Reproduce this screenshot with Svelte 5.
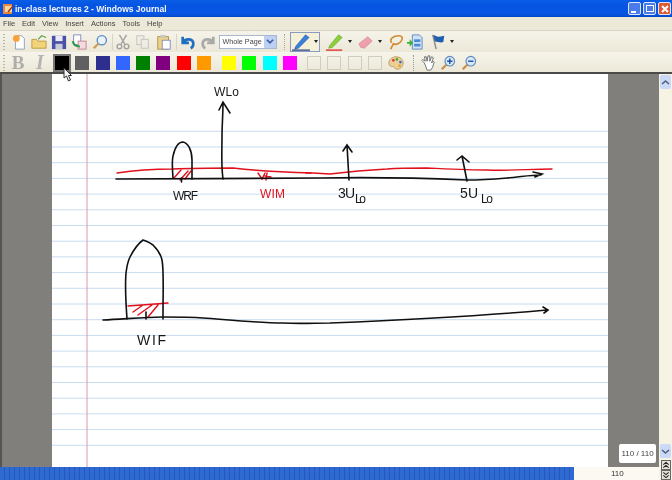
<script>
  const menus = ['File','Edit','View','Insert','Actions','Tools','Help'];
  const colors1 = ['#000000','#606060','#2e2e8e','#3366ff','#008000','#800080','#ff0000','#ff9900'];
  const colors2 = ['#ffff00','#00ff00','#00ffff','#ff00ff'];
  const rules = Array.from({length: 21}, (_, i) => 131.3 + i * 15.7 - 74);
</script>

<div class="app">
  <header class="title">
    <svg class="appicon" viewBox="0 0 12 12"><rect x="1" y="1" width="9" height="10" fill="#e8873a"/><rect x="3" y="3" width="7" height="6" fill="#f6d6a8"/><path d="M6 9 L11 3" stroke="#a03a10" stroke-width="1.500"/></svg>
    <span class="caption">in-class lectures 2 - Windows Journal</span>
    <div class="winbtns">
      <span class="wb"><i class="min"></i></span>
      <span class="wb"><i class="rest"></i></span>
      <span class="wb close"><svg viewBox="0 0 10 10"><path d="M2 2 L8 8 M8 2 L2 8" stroke="#fff" stroke-width="2"/></svg></span>
    </div>
  </header>

  <nav class="menu">
    {#each menus as m}<span>{m}</span>{/each}
  </nav>

  <div class="tb tb1">
    <span class="grip"></span>
    <svg class="ic" viewBox="0 0 18 18"><path d="M5 2h7l3 3v12H5z" fill="#fff" stroke="#8a9ab8"/><circle cx="6" cy="5" r="3.800" fill="#f7a23a"/></svg>
    <svg class="ic" viewBox="0 0 18 18"><path d="M1 16V6h5l2 2h9v8z" fill="#f2d37a" stroke="#b89a3c"/><path d="M8 6l4-4 5 2" fill="none" stroke="#5fa04a" stroke-width="1.300"/></svg>
    <svg class="ic" viewBox="0 0 18 18"><path d="M1 2h16v15H1z" fill="#4a50a8"/><rect x="5" y="2" width="8" height="6" fill="#e8eaf8"/><rect x="5" y="11" width="8" height="6" fill="#c8ccd8"/></svg>
    <svg class="ic" viewBox="0 0 18 18"><rect x="3" y="1" width="8" height="11" fill="#fff" stroke="#7a8ab8"/><rect x="8" y="8" width="9" height="9" fill="#f3d9e0" stroke="#c08090"/><path d="M2 8c1 5 4 6 8 6" fill="none" stroke="#2a9a4a" stroke-width="2.400"/></svg>
    <svg class="ic" viewBox="0 0 18 18"><circle cx="11" cy="7" r="5.200" fill="#e8f2fb" stroke="#5a8ac0" stroke-width="1.500"/><path d="M7 11 L2 16" stroke="#d09a50" stroke-width="2.600"/></svg>
    <span class="sep"></span>
    <svg class="ic dim" viewBox="0 0 18 18"><path d="M5 1l6 10M13 1L7 11" stroke="#8f9094" stroke-width="1.600"/><circle cx="5" cy="14" r="2.600" fill="none" stroke="#8f9094" stroke-width="1.600"/><circle cx="13" cy="14" r="2.600" fill="none" stroke="#8f9094" stroke-width="1.600"/></svg>
    <svg class="ic dim" viewBox="0 0 18 18"><rect x="2" y="2" width="8" height="10" fill="#eeeee6" stroke="#b8b8b0"/><rect x="7" y="6" width="8" height="10" fill="#eeeee6" stroke="#b8b8b0"/></svg>
    <svg class="ic" viewBox="0 0 18 18"><rect x="2" y="3" width="12" height="14" fill="#eed28a" stroke="#a8904a"/><rect x="7" y="7" width="9" height="10" fill="#fff" stroke="#7a8ab8"/><rect x="5" y="1" width="6" height="3" fill="#c8c8c8"/></svg>
    <span class="sep s2"></span>
    <svg class="ic" viewBox="0 0 18 18"><path d="M3 3v7h7M3 10c3-6 12-5 12 1 0 2-1 4-3 5" fill="none" stroke="#1f6fc0" stroke-width="3"/></svg>
    <svg class="ic" viewBox="0 0 18 18"><path d="M15 3v7H8M15 10C12 4 3 5 3 11c0 2 1 4 3 5" fill="none" stroke="#a9aaa6" stroke-width="3"/></svg>
    <span class="select"><span>Whole Page</span><b><svg viewBox="0 0 9 7"><path d="M1 1.500 L4.500 5 L8 1.500" fill="none" stroke="#3d5a9c" stroke-width="1.800"/></svg></b></span>
    <span class="sep wide"></span>
    <span class="pen active"><svg viewBox="0 0 22 20"><path d="M5 15 L16 2 L20 5 L8 17 L4 18z" fill="#3a7fd8" stroke="#174f9c" stroke-width=".6"/><path d="M1 19h20" stroke="#0a2a70" stroke-width="1.200"/></svg><em></em></span>
    <span class="pen green"><svg viewBox="0 0 22 20"><path d="M5 14 L15 2 L19 5 L8 16 L4 17z" fill="#8cd03a" stroke="#5a9a20" stroke-width=".6"/><path d="M1 19h18" stroke="#e02020" stroke-width="1.400"/></svg><em></em></span>
    <span class="pen"><svg class="small" viewBox="0 0 18 18"><path d="M1 11 L11 3 L16 8 L7 16 L3 15z" fill="#f0a0ac" stroke="#c87884" stroke-width=".6"/></svg><em></em></span>
    <svg class="ic lasso" viewBox="0 0 18 18"><path d="M4 10C1 5 7 2 12 2s5 4 2 7-6 3-8 2L3 17" fill="none" stroke="#d08a30" stroke-width="1.800"/></svg>
    <svg class="ic ins" viewBox="0 0 18 18"><path d="M6 1h8l3 3v13H6z" fill="#cfe2f6" stroke="#5a86c0"/><rect x="8" y="6" width="7" height="3" fill="#4a8ad0"/><rect x="8" y="11" width="7" height="3" fill="#4a8ad0"/><path d="M0 9h3V6l4 4-4 4v-3H0z" fill="#3ab03a"/></svg>
    <span class="pen"><svg class="small" viewBox="0 0 18 18"><path d="M3 1c3 0 4 2 7 2s4-1 6-1l-1 7c-3 1-4 0-6 0s-3-1-4 0z" fill="#1f5fb0"/><path d="M3 1l4 16" stroke="#8a8a8a" stroke-width="1.600"/></svg><em></em></span>
  </div>

  <div class="tb tb2">
    <span class="grip"></span>
    <b class="fmt">B</b><i class="fmt it">I</i>
    {#each colors1 as c, i}<span class="sw" class:on={i === 0} style:background={c}></span>{/each}
    <span class="gap g1"></span>
    {#each colors2 as c}<span class="sw" style:background={c}></span>{/each}
    <span class="gap g2"></span>
    {#each [0,1,2,3] as _}<span class="sw blank"></span>{/each}
    <svg class="ic pal" viewBox="0 0 18 18"><path d="M9 2c5 0 8 3 8 7s-3 7-7 7c-3 0-2-3-4-3s-5 0-5-4 4-7 8-7z" fill="#eccf96" stroke="#b89a5c"/><circle cx="6" cy="6" r="1.500" fill="#d83a3a"/><circle cx="10" cy="5" r="1.500" fill="#3ab03a"/><circle cx="14" cy="8" r="1.500" fill="#3a6ad8"/><circle cx="13" cy="12" r="1.500" fill="#e8a030"/></svg>
    <span class="sep dotted"></span>
    <svg class="ic" viewBox="0 0 18 18"><path d="M5 9L2 6l1-1 3 2-1-5 2 0 1 5 1-6 2 0 0 6 2-5 2 1-2 6 2-2 1 1-2 6-2 3H8z" fill="#fff" stroke="#555" stroke-width=".9"/></svg>
    <svg class="ic" viewBox="0 0 18 18"><circle cx="11" cy="7" r="5.400" fill="#d8e8f8" stroke="#5a8ac0" stroke-width="1.300"/><path d="M8 7h6M11 4v6" stroke="#1f4fa0" stroke-width="1.600"/><path d="M7 11L2 16" stroke="#c8904a" stroke-width="2.600"/></svg>
    <svg class="ic" viewBox="0 0 18 18"><circle cx="11" cy="7" r="5.400" fill="#d8e8f8" stroke="#5a8ac0" stroke-width="1.300"/><path d="M8 7h6" stroke="#1f4fa0" stroke-width="1.600"/><path d="M7 11L2 16" stroke="#c8904a" stroke-width="2.600"/></svg>
  </div>

  <div class="body">
    <div class="left">
      <main class="work">
        <div class="gutter"></div>
        <div class="page">
          <svg class="ink" viewBox="0 0 556 393" width="556" height="393">
            {#each rules as y}<line class="rule" x1="0" x2="556" y1={y} y2={y}></line>{/each}
            <line class="margin" x1="35" x2="35" y1="0" y2="393"></line>
            <g transform="translate(-52 -74)">
              <g class="r">
                <path d="M117 173 C130 171 145 169 173 169 C195 168 215 168 233 168 C250 170 280 172 313 173 L330 174 C345 172 365 170 387 169 C400 168 415 168 427 168 C450 169 470 170 487 170 C510 171 530 169 552 169"/>
                <path d="M174 178 L181 170 M180 180 L188 171 M185 179 L191 171"/>
                <path d="M258 173 L262 179 L265 173 M267 173 L266 180 M265 176 L271 177"/>
                <path d="M306 173 L311 173"/>
                <path d="M128 306 C140 305 155 304 168 303 M133 312 L143 305 M138 315 L152 305 M148 317 L158 305"/>
              </g>
              <g class="k">
                <path d="M116 179 C180 179 260 178 320 178 C370 177 420 178 467 180 C480 180 495 179 507 178 C520 177 530 175 541 175 M533 172 L542 174 L535 177"/>
                <path d="M223 179 C221 165 222 150 222 137 C222 125 223 115 223 102 M219 110 L223 102 L230 113"/>
                <path d="M173 178 C172 165 172 160 173 156 C175 147 179 142 183 142 C188 143 192 150 192 160 C192 168 192 173 192 179"/>
                <path d="M181.500 178 L181.500 182"/>
                <path d="M349 180 L347 145 M343 151 L347 145 L352 152"/>
                <path d="M467 181 L462 156 M457 160 L462 156 L469 162"/>
                <path d="M127 319 C126 305 125 285 126 273 C127 265 128 261 130 257 C134 249 139 243 143 240 C147 241 150 243 153 245 C158 250 161 255 162 260 C164 270 163 285 163 319"/>
                <path d="M103 320 C125 319 145 317 163 317 C180 317 190 317 203 318 C230 320 260 323 283 323 C300 324 315 323 330 323 C400 320 480 316 547 310 M543 307 L548 310 L544 313"/>
                <path d="M146 319 L146 312"/>
              </g>
              <text class="hw" x="214" y="96" textLength="25">WLo</text>
              <text class="hw" x="173" y="200" textLength="25">WRF</text>
              <text class="hw red" x="260" y="198" textLength="25">WIM</text>
              <text class="hw big" x="338" y="198" textLength="17">3U</text>
              <text class="hw sub" x="355" y="203" textLength="11">Lo</text>
              <text class="hw big" x="460" y="198" textLength="18">5U</text>
              <text class="hw sub" x="481" y="203" textLength="12">Lo</text>
              <text class="hw big" x="137" y="345" textLength="29">WIF</text>
            </g>
          </svg>
        </div>
        <div class="gutter right"><span class="pageno">110 / 110</span></div>
      </main>
      <footer class="status">
        <div class="progress"></div>
        <span class="num">110</span>
      </footer>
    </div>
    <div class="scroll">
      <span class="sb"><svg viewBox="0 0 9 7"><path d="M1 5 L4.500 2 L8 5" fill="none" stroke="#4d6185" stroke-width="1.600"/></svg></span>
      <span class="track"></span>
      <span class="sb"><svg viewBox="0 0 9 7"><path d="M1 2 L4.500 5 L8 2" fill="none" stroke="#4d6185" stroke-width="1.600"/></svg></span>
      <span class="pg first"><svg viewBox="0 0 9 9"><path d="M1.500 4 L4.500 1.500 L7.500 4 M1.500 7.500 L4.500 5 L7.500 7.500" fill="none" stroke="#222" stroke-width="1.200"/></svg></span>
      <span class="pg"><svg viewBox="0 0 9 9"><path d="M1.500 1.500 L4.500 4 L7.500 1.500 M1.500 5 L4.500 7.500 L7.500 5" fill="none" stroke="#222" stroke-width="1.200"/></svg></span>
    </div>
  </div>

  <svg class="cursor" viewBox="0 0 10 15"><path d="M1 1 L1 11 L3.500 9 L5.500 14 L7.500 13 L5.500 8.500 L8.500 8.500 Z" fill="#f4f4f4" stroke="#333" stroke-width="1"/></svg>
</div>

<style>
  :global(body) { margin: 0; overflow: hidden; }
  .app { width: 672px; height: 480px; display: flex; flex-direction: column; overflow: hidden; position: relative; font-family: "Liberation Sans", Arial, sans-serif; background: #ece9d8; filter: blur(.3px); }
  .title { height: 17px; display: flex; align-items: center; background: linear-gradient(#0a5ee6, #0554e2 30%, #0a56e4 80%, #0648c4); flex: none; }
  .appicon { width: 12px; height: 12px; margin-left: 2px; }
  .caption { margin-left: 1px; color: #f4f6ff; font: bold 8.500px "Liberation Sans", sans-serif; }
  .winbtns { margin-left: auto; margin-right: 1px; display: flex; gap: 2px; }
  .wb { width: 13px; height: 13px; border-radius: 2px; border: 1px solid #dfe6fb; box-sizing: border-box; background: #4a7be8; display: flex; align-items: center; justify-content: center; }
  .wb.close { background: #dc5a30; }
  .wb svg { width: 10px; height: 10px; }
  .min { width: 5px; height: 2px; background: #fff; margin-top: 6px; margin-right: 3px; }
  .rest { width: 6px; height: 5px; border: 1px solid #fff; }
  .menu { height: 13px; display: flex; gap: 7px; padding-left: 3px; align-items: center; font-size: 7.500px; color: #444; flex: none; }
  .tb { display: flex; align-items: center; flex: none; background: linear-gradient(#f6f4ea, #ebe8d8); box-sizing: border-box; padding-left: 3px; }
  .tb1 { height: 22px; border-top: 1px solid #d8d5c5; }
  .tb2 { height: 22px; border-top: 1px solid #f6f4ec; border-bottom: 2px solid #4a4a48; }
  .grip { width: 2px; height: 16px; margin-right: 5.500px; background: repeating-linear-gradient(#b8b5a5 0 1px, transparent 1px 3px); flex: none; }
  .tb2 .grip { margin-right: 6px; }
  .ic { width: 16px; height: 16px; margin-right: 4.300px; flex: none; }
  .dim { opacity: .8; }
  .sep { width: 1px; height: 16px; background: #d8d5c5; margin-right: 2px; flex: none; }
  .sep.s2 { margin-right: 3px; }
  .sep.wide { width: 0; border-left: 1px dotted #a8a598; background: none; margin-right: 4.400px; }
  .sep.dotted { width: 0; background: none; border-left: 1px dotted #999; margin: 0 6px 0 9px; }
  .select { width: 58px; height: 14px; flex: none; background: #fff; border: 1px solid #a8b8d0; display: flex; align-items: center; box-sizing: border-box; font-size: 7.200px; color: #444; padding-left: 2px; margin: 0 7px 0 -1px; }
  .select span { flex: 1; white-space: nowrap; }
  .select b { width: 12px; height: 12px; background: #bcd0f4; display: flex; align-items: center; justify-content: center; }
  .select svg { width: 8px; height: 7px; }
  .pen { display: flex; align-items: center; margin-right: 6px; flex: none; }
  .pen svg { width: 20px; height: 18px; margin-right: 3px; }
  .pen svg.small { width: 16px; height: 16px; margin-right: 4px; }
  .pen.active { box-sizing: border-box; width: 30px; height: 20px; background: #f5f0d8; outline: 1px solid #8a9ac0; outline-offset: -1px; padding-left: 1px; margin-right: 5px; }
  .pen.active svg { margin-right: 3px; }
  .pen em { width: 0; height: 0; border: 2.500px solid transparent; border-top: 3px solid #222; border-bottom: 0; }
  .lasso { margin-right: 3px; }
  .ins { margin-right: 7px; }
  .fmt { width: 14px; margin-right: 8px; text-align: center; color: #adadaa; font: bold 19px "Liberation Serif", serif; line-height: 1; flex: none; }
  .fmt.it { font: italic bold 20px "Liberation Serif", serif; color: #b4b4b0; }
  .sw { width: 14px; height: 14px; margin-right: 6.300px; box-sizing: border-box; flex: none; }
  .sw.on { outline: 2px solid #777; }
  .sw.blank { background: transparent; border: 1px solid #cfcdbf; }
  .gap { flex: none; }
  .g1 { width: 4.600px; }
  .g2 { width: 3.800px; }
  .pal { margin-right: 0; }
  .body { flex: 1; display: flex; min-height: 0; }
  .left { flex: 1; display: flex; flex-direction: column; min-width: 0; }
  .work { flex: 1; display: flex; min-height: 0; }
  .gutter { width: 52px; flex: none; background: #807f7b; border-left: 2px solid #555; box-sizing: border-box; }
  .gutter.right { width: 51px; border-left: 0; position: relative; }
  .page { width: 556px; flex: none; background: #fff; }
  .ink { display: block; }
  .rule { stroke: #c8dcf0; stroke-width: 1; }
  .margin { stroke: #d89aa8; stroke-width: 1; }
  .k path { fill: none; stroke: #101010; stroke-width: 1.600; stroke-linecap: round; }
  .r path { fill: none; stroke: #e0101c; stroke-width: 1.400; stroke-linecap: round; }
  .hw { font: 12px "Liberation Sans", sans-serif; fill: #181818; }
  .hw.red { fill: #e0101c; }
  .hw.big { font-size: 14px; }
  .hw.sub { font-size: 12px; }
  .pageno { position: absolute; right: 3px; bottom: 4px; width: 37px; height: 19px; background: #fff; border-radius: 2px; font-size: 8px; color: #444; display: flex; align-items: center; justify-content: center; }
  .scroll { width: 13px; flex: none; background: #f6f2e4; display: flex; flex-direction: column; align-items: center; box-sizing: border-box; padding-top: 1px; }
  .sb { width: 11px; height: 14px; background: #ccd9f6; border-radius: 2px; display: flex; align-items: center; justify-content: center; flex: none; }
  .sb svg { width: 9px; height: 7px; }
  .track { flex: 1; }
  .pg { width: 10px; height: 10px; background: #e4e2d6; border: 1px solid #666; box-sizing: border-box; display: flex; flex: none; }
  .pg.first { margin-top: 2px; }
  .pg svg { width: 100%; height: 100%; }
  .status { height: 13px; display: flex; align-items: center; flex: none; background: #fbf9f2; }
  .progress { width: 574px; height: 13px; background: repeating-linear-gradient(90deg, #2f6ad2 0 4px, #2458ba 4px 5px); }
  .num { margin-left: 37px; font-size: 8px; color: #333; }
  .cursor { position: absolute; left: 63px; top: 67px; width: 10px; height: 15px; }
</style>
